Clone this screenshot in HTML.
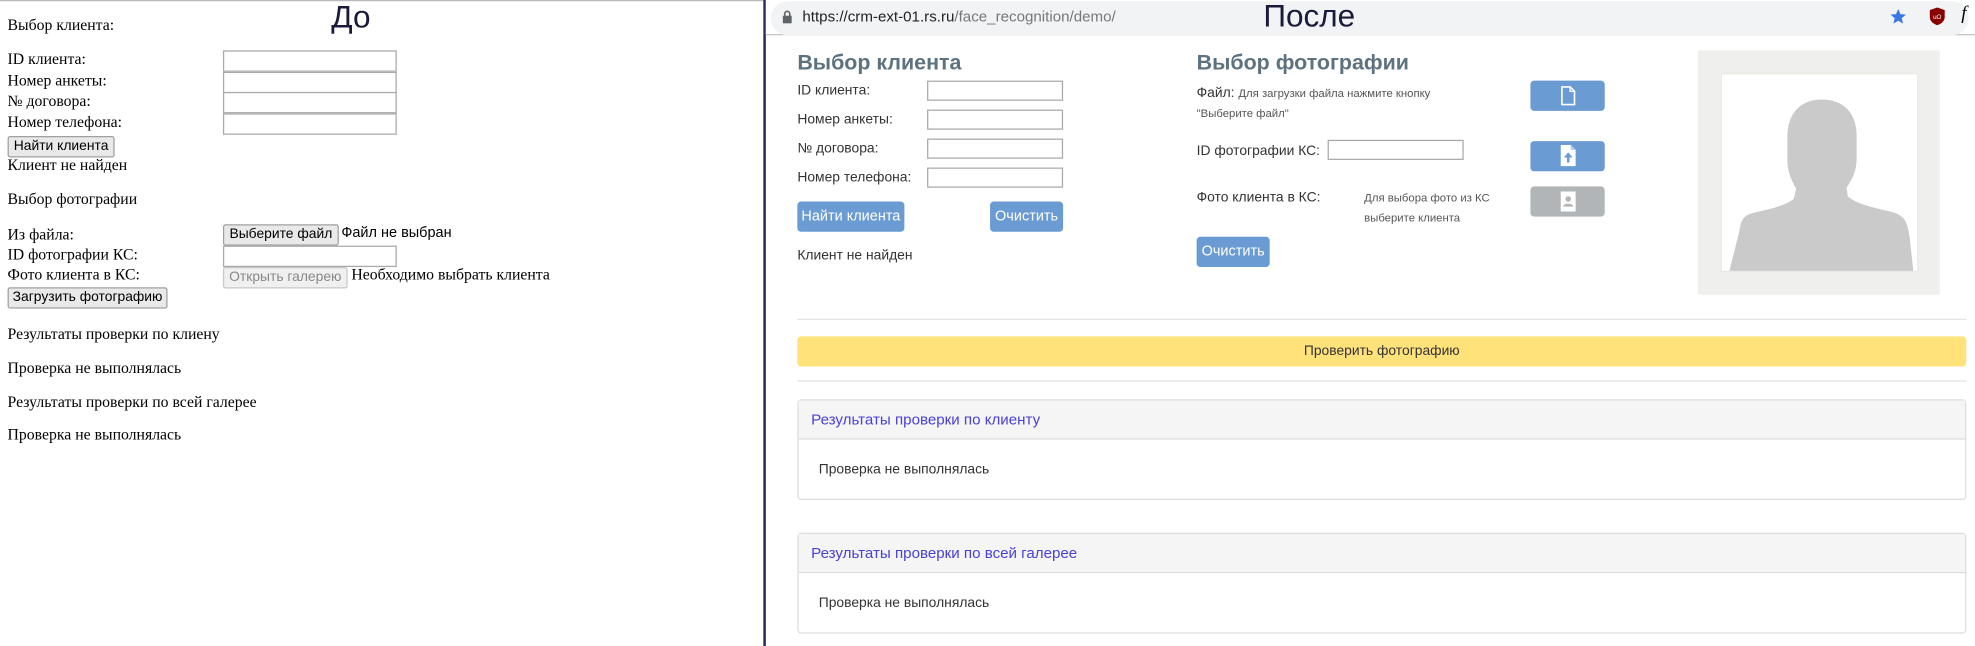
<!DOCTYPE html>
<html><head><meta charset="utf-8"><style>
html,body{margin:0;padding:0;background:#fff;width:1975px;height:646px;overflow:hidden}
#w{position:absolute;left:0;top:0;width:1568px;height:513px;transform:scale(1.2596);transform-origin:0 0}
.a{position:absolute;white-space:nowrap}
.t{font-family:"Liberation Serif",serif;font-size:12.5px;color:#000}
.s{font-family:"Liberation Sans",sans-serif}
.in{position:absolute;border:1px solid #a9a9a9;background:#fff;box-sizing:border-box}
.bt{position:absolute;box-sizing:border-box;border:1px solid #a0a0a0;background:#e9e9e9;border-radius:2px;font-family:"Liberation Sans",sans-serif;font-size:11px;text-align:center}
.r{font-family:"Liberation Sans",sans-serif;font-size:11px;color:#333}
.b{position:absolute;background:#6b9bd3;border-radius:3px;color:#fff;font-family:"Liberation Sans",sans-serif;font-size:11.5px;text-align:center}
.in2{position:absolute;border:1px solid #a9a9a9;background:#fff;box-sizing:border-box;height:16px;width:108px}
</style></head><body><div id="w">
<div class="a" style="left:0;top:0;width:606px;height:1px;background:#bbb"></div>
<div class="a" style="left:606px;top:0;width:2px;height:513px;background:#2a2a5a"></div>
<div class="a s" style="left:263px;top:0;font-size:25px;color:#1a1a3a">До</div>
<div class="a t" style="left:6px;top:13px">Выбор клиента:</div>
<div class="a t" style="left:6px;top:40px">ID клиента:</div>
<div class="a t" style="left:6px;top:57px">Номер анкеты:</div>
<div class="a t" style="left:6px;top:73px">№ договора:</div>
<div class="a t" style="left:6px;top:90px">Номер телефона:</div>
<div class="in" style="left:177px;top:40px;width:138px;height:17px"></div>
<div class="in" style="left:177px;top:57px;width:138px;height:17px"></div>
<div class="in" style="left:177px;top:73px;width:138px;height:17px"></div>
<div class="in" style="left:177px;top:90px;width:138px;height:17px"></div>
<div class="bt" style="left:6px;top:108px;width:85px;height:17px;line-height:15px">Найти клиента</div>
<div class="a t" style="left:6px;top:124px">Клиент не найден</div>
<div class="a t" style="left:6px;top:151px">Выбор фотографии</div>
<div class="a t" style="left:6px;top:179px">Из файла:</div>
<div class="bt" style="left:177px;top:178px;width:92px;height:17px;line-height:15px">Выберите файл</div>
<div class="a s" style="left:271px;top:179px;font-size:11.5px">Файл не выбран</div>
<div class="a t" style="left:6px;top:195px">ID фотографии КС:</div>
<div class="in" style="left:177px;top:195px;width:138px;height:17px"></div>
<div class="a t" style="left:6px;top:211px">Фото клиента в КС:</div>
<div class="bt" style="left:177px;top:212px;width:99px;height:17px;line-height:15px;color:#888;background:#f0f0f0;border-color:#c8c8c8">Открыть галерею</div>
<div class="a t" style="left:279px;top:211px">Необходимо выбрать клиента</div>
<div class="bt" style="left:6px;top:228px;width:127px;height:17px;line-height:15px">Загрузить фотографию</div>
<div class="a t" style="left:6px;top:258px">Результаты проверки по клиену</div>
<div class="a t" style="left:6px;top:285px">Проверка не выполнялась</div>
<div class="a t" style="left:6px;top:312px">Результаты проверки по всей галерее</div>
<div class="a t" style="left:6px;top:338px">Проверка не выполнялась</div>

<!-- browser bar -->
<div class="a" style="left:608px;top:0;width:960px;height:27px;background:#fff;border-bottom:1px solid #c4c4c4"></div>
<div class="a" style="left:612px;top:1px;width:951px;height:27px;background:#f1f3f4;border-radius:14px"></div>
<svg class="a" style="left:621px;top:8px" width="8" height="11" viewBox="0 0 8 11"><rect x="0.5" y="4.5" width="7" height="6" fill="#5f6368"/><path d="M2 5V3a2 2 0 0 1 4 0v2" stroke="#5f6368" stroke-width="1.3" fill="none"/></svg>
<div class="a s" style="left:637px;top:6px;font-size:12px;color:#222">https://crm-ext-01.rs.ru<span style="color:#777">/face_recognition/demo/</span></div>
<div class="a s" style="left:1003px;top:-1px;font-size:25px;color:#1a1a3a">После</div>
<svg class="a" style="left:1500px;top:6px" width="14" height="14" viewBox="0 0 24 24"><path d="M12 2l3 7 7.5.6-5.7 4.9 1.8 7.4L12 18l-6.6 3.9 1.8-7.4L1.5 9.6 9 9z" fill="#3b78e7"/></svg>
<svg class="a" style="left:1532px;top:6px" width="12" height="14" viewBox="0 0 12 14"><path d="M6 0L12 2v5c0 4-3 6-6 7-3-1-6-3-6-7V2z" fill="#800"/><text x="6" y="9" font-size="5" fill="#fff" text-anchor="middle" font-family="Liberation Sans">uO</text></svg>
<div class="a" style="left:1557px;top:3px;font-family:'Liberation Serif',serif;font-style:italic;font-size:15px">f</div>

<!-- after content -->
<div class="a s" style="left:633px;top:40px;font-size:17px;font-weight:bold;color:#5d7280">Выбор клиента</div>
<div class="a r" style="left:633px;top:66px">ID клиента:</div>
<div class="a r" style="left:633px;top:89px">Номер анкеты:</div>
<div class="a r" style="left:633px;top:112px">№ договора:</div>
<div class="a r" style="left:633px;top:135px">Номер телефона:</div>
<div class="in2" style="left:736px;top:64px"></div>
<div class="in2" style="left:736px;top:87px"></div>
<div class="in2" style="left:736px;top:110px"></div>
<div class="in2" style="left:736px;top:133px"></div>
<div class="b" style="left:633px;top:160px;width:85px;height:24px;line-height:24px">Найти клиента</div>
<div class="b" style="left:786px;top:160px;width:58px;height:24px;line-height:24px">Очистить</div>
<div class="a r" style="left:633px;top:197px">Клиент не найден</div>

<div class="a s" style="left:950px;top:40px;font-size:17px;font-weight:bold;color:#5d7280">Выбор фотографии</div>
<div class="a r" style="left:950px;top:68px">Файл: <span style="font-size:9px;color:#555">Для загрузки файла нажмите кнопку</span></div>
<div class="a r" style="left:950px;top:85px;font-size:9px;color:#555">"Выберите файл"</div>
<div class="a r" style="left:950px;top:114px">ID фотографии КС:</div>
<div class="in2" style="left:1054px;top:111px"></div>
<div class="a r" style="left:950px;top:151px">Фото клиента в КС:</div>
<div class="a r" style="left:1083px;top:152px;font-size:9px;color:#555">Для выбора фото из КС</div>
<div class="a r" style="left:1083px;top:168px;font-size:9px;color:#555">выберите клиента</div>
<div class="b" style="left:950px;top:188px;width:58px;height:24px;line-height:24px">Очистить</div>

<div class="b" style="left:1215px;top:64px;width:59px;height:24px"><svg style="margin-top:4px" width="12" height="16" viewBox="0 0 12 16"><path d="M1 1h6.5L11 4.5V15H1z" fill="none" stroke="#fff" stroke-width="1.3"/><path d="M7.5 1v3.5H11" fill="none" stroke="#fff" stroke-width="1"/></svg></div>
<div class="b" style="left:1215px;top:112px;width:59px;height:24px"><svg style="margin-top:3px" width="12" height="17" viewBox="0 0 12 17"><path d="M0 0h8l4 4v13H0z" fill="#fff"/><path d="M8 0v4h4" fill="#6b9bd3" opacity=".5"/><path d="M6 6L2.5 10H5v4h2v-4h2.5z" fill="#6b9bd3"/></svg></div>
<div class="b" style="left:1215px;top:148px;width:59px;height:24px;background:#b1b5b8"><svg style="margin-top:4px" width="12" height="16" viewBox="0 0 12 16"><rect width="12" height="16" fill="#fff"/><circle cx="6" cy="6" r="2.2" fill="#b1b5b8"/><path d="M2 12c0-3 8-3 8 0z" fill="#b1b5b8"/></svg></div>

<div class="a" style="left:1348px;top:40px;width:192px;height:194px;background:#efefed"></div>
<div class="a" style="left:1366px;top:58px;width:157px;height:158px;background:#fff;border:1px solid #e8e8e4;box-sizing:border-box"></div>
<svg class="a" style="left:1366px;top:58px" width="157" height="158" viewBox="0 0 157 158"><path d="M80 21C62 21 53 34 53 50L53 70C53 80 58 88 60 92L58 100C50 106 38 108 26 111C18 113 16 117 15 125L7 157H153L150 130C148 117 146 113 135 110C122 107 108 104 101 98L100 91C104 85 108 78 108 68L108 50C108 32 98 21 80 21Z" fill="#cacaca"/></svg>

<div class="a" style="left:633px;top:253px;width:928px;height:1px;background:#e3e3e3"></div>
<div class="a s" style="left:633px;top:267px;width:928px;height:24px;line-height:24px;background:#ffe27a;border-radius:3px;text-align:center;font-size:11px;color:#333">Проверить фотографию</div>
<div class="a" style="left:633px;top:302px;width:928px;height:1px;background:#e3e3e3"></div>

<div class="a" style="left:633px;top:317px;width:928px;height:80px;border:1px solid #ddd;border-radius:3px;box-sizing:border-box">
<div style="height:30px;background:#f5f5f5;border-bottom:1px solid #ddd;font-family:'Liberation Sans',sans-serif;font-size:12px;color:#4840d8;line-height:30px;padding-left:10px">Результаты проверки по клиенту</div>
<div class="r" style="padding:18px 0 0 16px">Проверка не выполнялась</div></div>
<div class="a" style="left:633px;top:423px;width:928px;height:80px;border:1px solid #ddd;border-radius:3px;box-sizing:border-box">
<div style="height:30px;background:#f5f5f5;border-bottom:1px solid #ddd;font-family:'Liberation Sans',sans-serif;font-size:12px;color:#4840d8;line-height:30px;padding-left:10px">Результаты проверки по всей галерее</div>
<div class="r" style="padding:18px 0 0 16px">Проверка не выполнялась</div></div>
</div></body></html>
